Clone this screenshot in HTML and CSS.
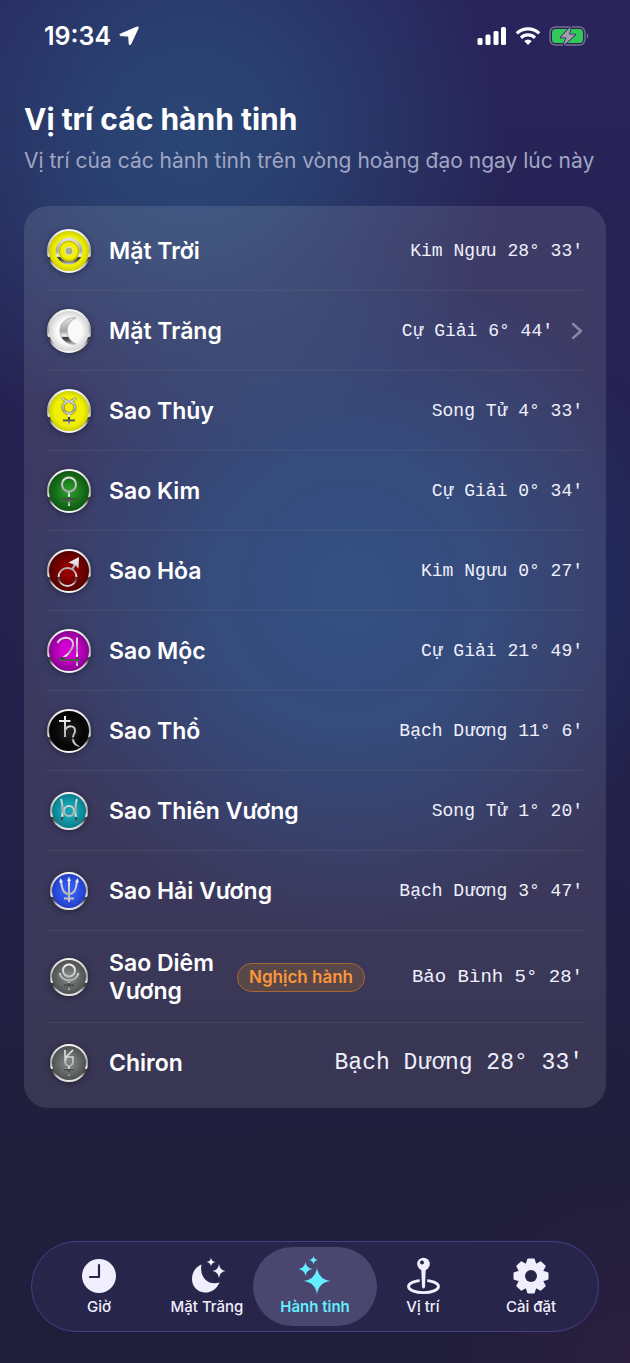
FILE: index.html
```html
<!DOCTYPE html>
<html lang="vi">
<head>
    <meta charset="UTF-8">
    <meta name="viewport" content="width=device-width, initial-scale=1.0">
    <title>Vị trí các hành tinh</title>
    <link rel="stylesheet" href="styles.css">
</head>
<body>
    <!-- shared gradients for the planet coins -->
    <svg class="defs" width="0" height="0" aria-hidden="true">
        <defs>
            <linearGradient id="metal" gradientUnits="userSpaceOnUse" x1="0" y1="-22" x2="0" y2="22">
                <stop offset="0" stop-color="#ffffff"/>
                <stop offset="0.3" stop-color="#d0d0d0"/>
                <stop offset="0.5" stop-color="#a5a5a5"/>
                <stop offset="0.62" stop-color="#f4f4f4"/>
                <stop offset="0.65" stop-color="#333333"/>
                <stop offset="0.72" stop-color="#5a5a5a"/>
                <stop offset="0.8" stop-color="#c8c8c8"/>
                <stop offset="1" stop-color="#ffffff"/>
            </linearGradient>
            <linearGradient id="silver" gradientUnits="userSpaceOnUse" x1="0" y1="-16" x2="0" y2="16">
                <stop offset="0" stop-color="#ffffff"/>
                <stop offset="0.6" stop-color="#b5b5b5"/>
                <stop offset="1" stop-color="#dddddd"/>
            </linearGradient>
            <radialGradient id="yellow"><stop offset="0.7" stop-color="#f0f000"/><stop offset="1" stop-color="#c9c900"/></radialGradient>
            <radialGradient id="white"><stop offset="0.6" stop-color="#fafafa"/><stop offset="1" stop-color="#cfcfcf"/></radialGradient>
            <radialGradient id="green"><stop offset="0.1" stop-color="#2b9a2b"/><stop offset="1" stop-color="#0c5410"/></radialGradient>
            <radialGradient id="red"><stop offset="0.2" stop-color="#960000"/><stop offset="1" stop-color="#500000"/></radialGradient>
            <radialGradient id="magenta"><stop offset="0.4" stop-color="#cf00d0"/><stop offset="1" stop-color="#84008a"/></radialGradient>
            <radialGradient id="black"><stop offset="0" stop-color="#222222"/><stop offset="0.7" stop-color="#060606"/></radialGradient>
            <radialGradient id="teal"><stop offset="0.4" stop-color="#14a3b3"/><stop offset="1" stop-color="#087988"/></radialGradient>
            <radialGradient id="blue"><stop offset="0.4" stop-color="#3459ee"/><stop offset="1" stop-color="#213bc0"/></radialGradient>
            <radialGradient id="gray"><stop offset="0.2" stop-color="#7d8081"/><stop offset="1" stop-color="#4b4d4e"/></radialGradient>
        </defs>
    </svg>

    <div class="status-bar">
        <div class="status-left">
            <span class="time">19:34</span>
            <svg width="20" height="20" viewBox="0 0 20 20" aria-hidden="true">
                <path d="M18 1 1.300 8.200Q.2 9 1.500 9.600L9 10.100Q9.800 10.200 9.800 11L10.200 18Q10.800 19.600 11.700 18.200L19.200 2Q19.500.6 18 1Z" fill="#fff" stroke="#fff" stroke-linejoin="round"/>
            </svg>
        </div>
        <div class="status-right">
            <svg width="30" height="20" viewBox="0 0 30 20" fill="#fff" aria-hidden="true">
                <rect x="0.500" y="12" width="5" height="7" rx="1.500"/>
                <rect x="8.500" y="8.500" width="5" height="10.500" rx="1.500"/>
                <rect x="16.500" y="5" width="5" height="14" rx="1.500"/>
                <rect x="24" y="1" width="5" height="18" rx="1.500"/>
            </svg>
            <svg width="26" height="20" viewBox="0 0 26 20" fill="none" stroke="#fff" stroke-width="3.200" aria-hidden="true">
                <path d="M1.800 7.400a16 16 0 0 1 22.400 0"/>
                <path d="M6 11.800a10 10 0 0 1 14 0"/>
                <path d="M9.200 15Q13 11.800 16.800 15L13 19Z" fill="#fff" stroke="none"/>
            </svg>
            <svg width="41" height="20" viewBox="0 0 41 20" aria-hidden="true">
                <rect x="1" y="1" width="35" height="18" rx="5.500" fill="none" stroke="#77738f" stroke-width="1.400"/>
                <rect x="3" y="3" width="31" height="14" rx="3.500" fill="#34c759"/>
                <path d="M38 7q2.400 3 0 6z" fill="#77738f"/>
                <path d="M22 .500 11.500 11.500h6L14.500 19.500 26.500 8.500h-6.500z" fill="#a3a0b4" stroke="#28255a" stroke-width="1.600" stroke-linejoin="round" paint-order="stroke"/>
            </svg>
        </div>
    </div>

    <header class="header">
        <h1>Vị trí các hành tinh</h1>
        <p>Vị trí của các hành tinh trên vòng hoàng đạo ngay lúc này</p>
    </header>

    <main>
        <ul class="planets">
            <li class="planet">
                <svg class="coin" viewBox="-22 -22 44 44" aria-hidden="true">
                    <circle class="disc" r="21" fill="url(#yellow)"/>
                    <circle class="glyph wide" r="12"/>
                    <circle r="9.500" fill="none" stroke="#9a9a00" stroke-width="0.800"/>
                    <circle r="4" fill="#a9a98c" stroke="#e4e4c8"/>
                </svg>
                <span class="name">Mặt Trời</span>
                <span class="position">Kim Ngưu 28° 33'</span>
            </li>
            <li>
                <a class="planet" href="#mat-trang">
                    <svg class="coin" viewBox="-22 -22 44 44" aria-hidden="true">
                        <circle class="disc" r="21" fill="url(#white)"/>
                        <path d="M7-13A13.300 13.300 0 1 0 7 13A13.900 13.900 0 0 1 7-13Z" fill="url(#metal)" stroke="#999" stroke-width="0.600"/>
                    </svg>
                    <span class="name">Mặt Trăng</span>
                    <span class="position">Cự Giải 6° 44'</span>
                    <svg class="chevron" width="12" height="18" viewBox="0 0 12 18" aria-hidden="true">
                        <path d="M2 2l8 7-8 7" fill="none" stroke="#8a87a5" stroke-width="2.400" stroke-linecap="round" stroke-linejoin="round"/>
                    </svg>
                </a>
            </li>
            <li class="planet">
                <svg class="coin" viewBox="-22 -22 44 44" aria-hidden="true">
                    <circle class="disc" r="21" fill="url(#yellow)"/>
                    <g class="shade"><circle cy="-3.500" r="6"/><path d="M-6.500-13.500Q-5-9.500 0-9.500T6.500-13.500"/></g>
                    <path class="glyph" d="M-6.500-13.500Q-5-9.500 0-9.500T6.500-13.500M0 2.500V14.500M-6 9.500H6"/>
                    <circle class="glyph" cy="-3.500" r="6"/>
                </svg>
                <span class="name">Sao Thủy</span>
                <span class="position">Song Tử 4° 33'</span>
            </li>
            <li class="planet">
                <svg class="coin" viewBox="-22 -22 44 44" aria-hidden="true">
                    <circle class="disc" r="21" fill="url(#green)"/>
                    <circle class="glyph" cy="-6.500" r="7"/>
                    <path class="glyph" d="M0 .500V15M-7.500 8.500H7.500"/>
                </svg>
                <span class="name">Sao Kim</span>
                <span class="position">Cự Giải 0° 34'</span>
            </li>
            <li class="planet">
                <svg class="coin" viewBox="-22 -22 44 44" aria-hidden="true">
                    <circle class="disc" r="21" fill="url(#red)"/>
                    <circle class="glyph" cx="-1.500" cy="6" r="9"/>
                    <path class="glyph" d="M3.500-2 7-8.500"/>
                    <path d="M10-14 9.500-2.500 6-6 -.500-8.500Z" fill="url(#silver)"/>
                </svg>
                <span class="name">Sao Hỏa</span>
                <span class="position">Kim Ngưu 0° 27'</span>
            </li>
            <li class="planet">
                <svg class="coin" viewBox="-22 -22 44 44" aria-hidden="true">
                    <circle class="disc" r="21" fill="url(#magenta)"/>
                    <path class="glyph" d="M-11.500-8C-9-13.500-1-15 3-10.500C7-5-1 5-10 9H11M8-13.500V15"/>
                </svg>
                <span class="name">Sao Mộc</span>
                <span class="position">Cự Giải 21° 49'</span>
            </li>
            <li class="planet">
                <svg class="coin" viewBox="-22 -22 44 44" aria-hidden="true">
                    <circle class="disc" r="21" fill="url(#black)"/>
                    <path class="glyph light" d="M-4-15V6M-10-10H1.500M-4-1C-1-6 6-6 6 0C6 3 4 3 4 6.500"/>
                    <path d="M3 8.500C4 13 6 15 10.500 15.500C7 13.500 5.500 11.500 4.500 8Z" fill="url(#silver)" stroke="#aaaaaa" stroke-width="0.600"/>
                </svg>
                <span class="name">Sao Thổ</span>
                <span class="position">Bạch Dương 11° 6'</span>
            </li>
            <li class="planet">
                <svg class="coin" viewBox="-22 -22 44 44" aria-hidden="true">
                    <circle class="disc" r="18" fill="url(#teal)"/>
                    <circle class="glyph light" r="5"/>
                    <path class="glyph" d="M-8-12Q-6.500-8-6.500 0T-8 11M8-12Q6.500-8 6.500 0T8 11"/>
                </svg>
                <span class="name">Sao Thiên Vương</span>
                <span class="position">Song Tử 1° 20'</span>
            </li>
            <li class="planet">
                <svg class="coin" viewBox="-22 -22 44 44" aria-hidden="true">
                    <circle class="disc" r="18" fill="url(#blue)"/>
                    <path class="glyph light" d="M0-12V11M-8-10C-7-1-5 3 0 3S7-1 8-10M-5 7.500H5"/>
                    <path d="M0-14.500 2-10H-2ZM-8.500-13-6-9-10-8.500ZM8.500-13 10-8.500 6-9Z" fill="#e8e8f0"/>
                </svg>
                <span class="name">Sao Hải Vương</span>
                <span class="position">Bạch Dương 3° 47'</span>
            </li>
            <li class="planet">
                <svg class="coin" viewBox="-22 -22 44 44" aria-hidden="true">
                    <circle class="disc" r="18" fill="url(#gray)"/>
                    <circle class="glyph light" cy="-6.500" r="6"/>
                    <path class="glyph light" d="M-9.500-4A9.800 9.800 0 0 0 9.500-4"/>
                    <path class="glyph" d="M0 5V13M-5 8.500H5"/>
                </svg>
                <span class="name name-wrap">Sao Diêm Vương</span>
                <span class="badge">Nghịch hành</span>
                <span class="position position-medium">Bảo Bình 5° 28'</span>
            </li>
            <li class="planet">
                <svg class="coin" viewBox="-22 -22 44 44" aria-hidden="true">
                    <circle class="disc" r="18" fill="url(#gray)"/>
                    <path class="glyph light thin" d="M-4-13V-1Q-3 3 0 3T4-1V-6H-3L4-13M-3-7V-2"/>
                    <path class="glyph thin" d="M0 3V13M-5 6.500H5"/>
                </svg>
                <span class="name">Chiron</span>
                <span class="position position-large">Bạch Dương 28° 33'</span>
            </li>
        </ul>
    </main>

    <nav class="tab-bar">
        <a class="tab" href="#gio">
            <svg width="40" height="40" viewBox="-20 -20 40 40" aria-hidden="true">
                <circle r="17" fill="#f1effe"/>
                <path d="M0-11V1H-9" fill="none" stroke="#28254b" stroke-width="2.200" stroke-linecap="round" stroke-linejoin="round"/>
            </svg>
            Giờ
        </a>
        <a class="tab" href="#mat-trang">
            <svg width="40" height="40" viewBox="-20 -20 40 40" fill="#f1effe" aria-hidden="true">
                <path d="M-5.500-11.500C-8 2 2 10 12.500 6.500C9 14.500 2.500 17 -2.500 16.500C-10 16-15 10-15 3C-15-4-11-9.500-5.500-11.500Z"/>
                <path d="M12-12Q12.800-5.800 18.500-5Q12.800-4.200 12 2Q11.200-4.200 5.500-5Q11.200-5.800 12-12Z"/>
                <path d="M4-18.500Q4.500-14.500 8.500-14Q4.500-13.500 4-9.500Q3.500-13.500-.500-14Q3.500-14.500 4-18.500Z"/>
            </svg>
            Mặt Trăng
        </a>
        <a class="tab active" href="#hanh-tinh" aria-current="page">
            <svg width="40" height="40" viewBox="-20 -20 40 40" fill="#63efff" aria-hidden="true">
                <path d="M2-8.500Q3.500 3.500 15.500 5Q3.500 6.500 2 18.500Q.500 6.500-11.500 5Q.500 3.500 2-8.500Z"/>
                <path d="M-9.500-14Q-8.500-8-2.500-7Q-8.500-6-9.500 0Q-10.500-6-16.500-7Q-10.500-8-9.500-14Z"/>
                <path d="M-1.500-20Q-1-16.500 3-16Q-1-15.500-1.500-11.500Q-2-15.500-6-16Q-2-16.500-1.500-20Z"/>
            </svg>
            Hành tinh
        </a>
        <a class="tab" href="#vi-tri">
            <svg width="40" height="40" viewBox="-20 -20 40 40" aria-hidden="true">
                <ellipse cx="0.500" cy="10.500" rx="15" ry="6.200" fill="none" stroke="#f1effe" stroke-width="2.800"/>
                <path d="M-1.800-8H2.800L2 11Q.500 14-1 11Z" fill="#f1effe" stroke="#28254b" stroke-width="4" paint-order="stroke"/>
                <circle cx="0.500" cy="-12" r="6.300" fill="#f1effe"/>
                <circle cx="-1" cy="-13.500" r="2" fill="#28254b"/>
            </svg>
            Vị trí
        </a>
        <a class="tab" href="#cai-dat">
            <svg width="40" height="40" viewBox="-20 -20 40 40" aria-hidden="true">
                <g fill="#f1effe" stroke="#f1effe" stroke-width="2" stroke-linejoin="round">
                    <path id="tooth" d="M-4.500-11-2.800-16.500H2.800L4.500-11V11L2.800 16.500H-2.800L-4.500 11Z"/>
                    <use href="#tooth" transform="rotate(45)"/>
                    <use href="#tooth" transform="rotate(90)"/>
                    <use href="#tooth" transform="rotate(135)"/>
                </g>
                <circle r="13" fill="#f1effe"/>
                <circle r="6" fill="#28254b"/>
            </svg>
            Cài đặt
        </a>
    </nav>
</body>
</html>
```
FILE: styles.css
```css
* {
    box-sizing: border-box;
}
body {
    margin: 0;
    min-height: 100vh;
    display: flex;
    flex-direction: column;
    font-family: Inter, "Noto Sans", sans-serif;
    color: #fff;
    background:
        radial-gradient(circle at 190px 140px, #2a4675 0, rgba(42, 70, 117, 0.8) 110px, rgba(42, 70, 117, 0) 320px),
        radial-gradient(circle at 350px 590px, #1b3b74 0, rgba(27, 59, 116, 0.8) 140px, rgba(27, 59, 116, 0) 340px),
        radial-gradient(circle at 100% 100%, #2b1f40 0, rgba(43, 31, 64, 0) 200px),
        linear-gradient(#29245b, #262252 25%, #232048 65%, #201e3b 85%);
}
a {
    color: inherit;
    text-decoration: none;
}
.defs {
    position: absolute;
}

/* status bar */
.status-bar {
    height: 72px;
    padding: 0 40px 0 44px;
    display: flex;
    align-items: center;
    justify-content: space-between;
}
.status-left,
.status-right {
    display: flex;
    align-items: center;
    gap: 8px;
}
.time {
    font-size: 25px;
    font-weight: 600;
}

.header {
    padding: 26px 24px 24px;
}
.header h1 {
    margin: 0;
    font-size: 30px;
    line-height: 42px;
    font-weight: 700;
}
.header p {
    margin: 0;
    font-size: 21px;
    line-height: 42px;
    color: #a0a6c4;
    white-space: nowrap;
}

/* planet list */
.planets {
    margin: 0 24px 32px;
    padding: 5px 23px 6px;
    list-style: none;
    background: rgba(255, 255, 255, 0.11);
    border-radius: 24px;
}
.planets > li + li {
    border-top: 1px solid rgba(110, 105, 110, 0.3);
}
.planet {
    display: flex;
    align-items: center;
    padding: 18px 0 17px;
}
.coin {
    flex: none;
    width: 44px;
    height: 44px;
    margin-right: 18px;
    overflow: visible;
    filter: drop-shadow(0 1px 3px rgba(0, 0, 0, 0.4));
}
.disc {
    stroke: url(#metal);
    stroke-width: 2;
}
.glyph {
    fill: none;
    stroke: url(#metal);
    stroke-width: 2;
}
.glyph.wide {
    stroke-width: 3;
}
.glyph.thin {
    stroke-width: 1.5;
}
.glyph.light {
    stroke: url(#silver);
}
.shade {
    fill: none;
    stroke: #77770a;
    stroke-width: 3;
}
.name {
    font-size: 23px;
    line-height: 28px;
    font-weight: 600;
}
.name-wrap {
    width: 116px;
    margin-right: 12px;
}
.position {
    margin-left: auto;
    font-family: "Liberation Mono", monospace;
    font-size: 18px;
    line-height: 28px;
    color: #f0f0fc;
    white-space: nowrap;
}
.position-medium {
    font-size: 19px;
}
.position-large {
    font-size: 23px;
}
.chevron {
    margin-left: 18px;
}
.badge {
    padding: 0 11px;
    border: 1px solid #a86536;
    border-radius: 15px;
    background: rgba(255, 149, 0, 0.16);
    color: #fb963b;
    font-size: 17px;
    line-height: 27px;
    font-weight: 600;
    white-space: nowrap;
}

/* bottom tabs */
.tab-bar {
    margin: auto 31px 31px;
    height: 91px;
    padding: 5px 13px;
    display: grid;
    grid-template-columns: repeat(5, 1fr);
    background: #28254b;
    border: 1px solid #463d8c;
    border-radius: 46px;
}
.tab {
    display: flex;
    flex-direction: column;
    align-items: center;
    padding-top: 9px;
    font-size: 15px;
    line-height: 22px;
    font-weight: 500;
    color: #f1effe;
    white-space: nowrap;
}
.tab.active {
    margin: 0 -8px;
    border-radius: 40px;
    background: #4a466f;
    color: #63efff;
    font-weight: 600;
}
```
